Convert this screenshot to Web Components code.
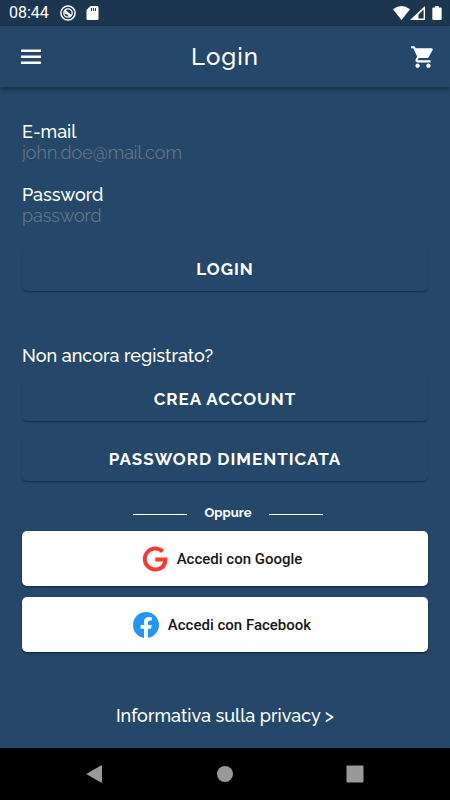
<!DOCTYPE html>
<html lang="it">
<head>
<meta charset="utf-8">
<meta name="viewport" content="width=device-width, initial-scale=1">
<title>Login</title>
<style>
html,body{margin:0;min-height:100%}
body{background:#254769;color:#fff;font-family:Raleway,Lato,"Open Sans",sans-serif;font-size:18px;font-weight:500;line-height:21px}
</style>
</head>
<body>
<login-screen></login-screen>
<script>
function define(name, markup) {
  const template = document.createElement('template');
  template.innerHTML = markup;
  customElements.define(name, class extends HTMLElement {
    constructor() {
      super();
      this.attachShadow({ mode: 'open' }).append(template.content.cloneNode(true));
    }
    connectedCallback() {
      const input = this.shadowRoot.querySelector('input');
      if (input) {
        input.type = this.getAttribute('type');
        input.placeholder = this.getAttribute('placeholder');
      }
    }
  });
}

define('status-bar', `
<style>
:host{display:flex;align-items:center;height:26px;padding:0 8px 0 9px;background:#1d364f;font:16px/26px Roboto,sans-serif}
svg{display:block;fill:currentColor}
.clock{margin-right:11px}
.disc{margin-right:10px}
.signals{display:flex;align-items:center;margin-left:auto}
.battery{margin-left:7px}
</style>
<span class="clock">08:44</span>
<svg class="disc" width="16" height="16" viewBox="0 0 16 16"><circle cx="8" cy="8" r="7.100" fill="none" stroke="currentColor" stroke-width="1.500"/><circle cx="8" cy="8" r="4.200" fill="none" stroke="currentColor" stroke-width="1.300"/><path d="M5 4.600 11.500 10l-2 2-2.300-2.600-2.700-.9z"/></svg>
<svg width="13" height="14" viewBox="0 0 13 14"><path fill-rule="evenodd" d="M4.5 0h6.8Q12.5 0 12.5 1.2v11.6q0 1.2-1.2 1.2H1.7Q.5 14 .5 12.8V4zM5 2v3h1V2zm2 0v3h1V2zm2 0v3h1V2z"/></svg>
<span class="signals">
<svg width="17" height="14" viewBox="0 0 17 14"><path d="M0 3.200Q8.500-3.200 17 3.200L8.500 14z"/></svg>
<svg width="15" height="14" viewBox="0 0 15 14"><path fill-rule="evenodd" d="M15 0v14H0zM13.600 3.500 8.500 8.600v4h5.100z"/></svg>
<svg class="battery" width="10" height="14" viewBox="0 0 10 15"><path d="M3 0h4v1.500h1.800Q10 1.500 10 2.700v11q0 1.300-1.200 1.300H1.200Q0 15 0 13.700v-11q0-1.200 1.200-1.200H3z"/></svg>
</span>`);

define('app-bar', `
<style>
:host{display:grid;grid-template-columns:1fr auto 1fr;align-items:center;height:61px;padding:0 14px;background:#254769;box-shadow:0 2px 5px #0006;box-sizing:border-box}
button{display:grid;padding:0 0 0 4px;border:0;background:none;color:inherit}
button:last-child{justify-self:end}
h1{margin:0;font:500 24px/30px Raleway,Lato,sans-serif;letter-spacing:1px}
svg{fill:currentColor}
</style>
<button aria-label="Menu"><svg width="26" height="26" viewBox="0 0 26 26"><path d="M3 5.500h20v2.500H3zM3 11.500h20v2.500H3zM3 17.500h20V20H3z"/></svg></button>
<h1><slot></slot></h1>
<button aria-label="Carrello"><svg width="26" height="26" viewBox="0 0 24 24"><path d="M7 18c-1.100 0-1.990.9-1.990 2S5.900 22 7 22s2-.9 2-2-.9-2-2-2zM1 2v2h2l3.600 7.590-1.350 2.450c-.16.280-.25.610-.25.960 0 1.100.9 2 2 2h12v-2H7.420c-.14 0-.25-.11-.25-.25l.03-.12.900-1.630h7.450c.75 0 1.410-.41 1.750-1.030l3.580-6.490A1 1 0 0 0 20 4H5.210l-.94-2H1zm16 16c-1.100 0-1.990.9-1.990 2s.89 2 1.990 2 2-.9 2-2-.9-2-2-2z"/></svg></button>`);

define('text-field', `
<style>
:host{display:block}
label{display:block}
input{display:block;width:100%;height:21px;padding:0;border:0;outline:0;background:none;color:inherit;font:inherit}
input::placeholder{color:#71818f;opacity:1;font-weight:300}
</style>
<label><slot></slot><input></label>`);

define('raised-button', `
<style>
:host{display:block}
button{display:block;width:100%;height:44px;padding:0;border:0;border-radius:5px;background:#254769;color:inherit;font:inherit;font-size:17px;font-weight:700;letter-spacing:1px;box-shadow:0 2px 2px -1px #0005,0 1px 2px #0001}
</style>
<button type="button"><slot></slot></button>`);

define('social-button', `
<style>
:host{display:block}
button{display:flex;align-items:center;justify-content:center;gap:9px;width:100%;height:55px;padding:0 6px 0 0;border:0;border-radius:5px;background:#fff;color:#161616;font:500 15px/20px Roboto,sans-serif;box-shadow:0 1px 2px #0008}
</style>
<button type="button"><slot name="icon"></slot><span><slot></slot></span></button>`);

define('or-divider', `
<style>
:host{display:flex;align-items:center;justify-content:center;gap:17px;padding-left:6px;font:700 13px/16px Raleway,Lato,sans-serif}
i{width:54px;height:1px;margin-top:3px;background:#fff}
</style>
<i></i><slot></slot><i></i>`);

define('nav-bar', `
<style>
:host{display:flex;align-items:center;justify-content:center;gap:112px;height:52px;background:#000}
button{display:grid;padding:0;border:0;background:none;color:#999}
svg{fill:currentColor}
</style>
<button aria-label="Indietro"><svg width="18" height="18" viewBox="0 0 18 18"><path d="M16 1v16q0 1-1 .5L1 9.500q-1-.5 0-1L15 .5q1-.5 1 .5z"/></svg></button>
<button aria-label="Home"><svg width="18" height="18" viewBox="0 0 18 18"><circle cx="9" cy="9" r="8"/></svg></button>
<button aria-label="Recenti"><svg width="18" height="18" viewBox="0 0 18 18"><rect x=".5" y=".5" width="17" height="17" rx="1"/></svg></button>`);

define('login-screen', `
<style>
:host{display:flex;flex-direction:column;min-height:100vh}
main{flex:1;display:flex;flex-direction:column;padding:34px 22px 22px}
form,section{display:flex;flex-direction:column}
form{gap:21px;margin-bottom:54px}
p{margin:0 0 11px}
section{gap:16px}
or-divider{margin:24px 0 10px}
.social{gap:11px}
a{color:inherit;text-decoration:none;align-self:center;margin-top:auto}
</style>
<status-bar></status-bar>
<app-bar>Login</app-bar>
<main>
<form>
<text-field type="email" placeholder="john.doe@mail.com">E-mail</text-field>
<text-field type="password" placeholder="password">Password</text-field>
<raised-button>LOGIN</raised-button>
</form>
<p>Non ancora registrato?</p>
<section>
<raised-button>CREA ACCOUNT</raised-button>
<raised-button>PASSWORD DIMENTICATA</raised-button>
</section>
<or-divider>Oppure</or-divider>
<section class="social">
<social-button><svg slot="icon" width="26" height="26" viewBox="0 0 26 26"><path fill="#f83b30" d="M22.200 4.100 19.300 6.900A8.600 8.600 0 0 0 13.300 4.500C8.600 4.500 4.800 8.300 4.800 13s3.800 8.500 8.500 8.500c4.200 0 7-2.400 7.700-6h-7.700v-4h12.100c.1.700.1 1.300.1 2C25.500 20.600 20.600 25.500 13.300 25.500A12.500 12.500 0 1 1 13.300.5c3.400 0 6.500 1.300 8.900 3.600z"/></svg>Accedi con Google</social-button>
<social-button><svg slot="icon" width="26" height="26" viewBox="0 0 24 24"><path fill="#2196f3" d="M24 12.070C24 5.400 18.630 0 12 0S0 5.400 0 12.070C0 18.100 4.390 23.090 10.130 24v-8.440H7.080v-3.490h3.050V9.410c0-3.020 1.790-4.690 4.530-4.690 1.310 0 2.680.24 2.680.24v2.970h-1.510c-1.490 0-1.960.93-1.960 1.890v2.250h3.330l-.53 3.490h-2.800V24C19.610 23.090 24 18.100 24 12.070z"/></svg>Accedi con Facebook</social-button>
</section>
<a href="#privacy">Informativa sulla privacy &gt;</a>
</main>
<nav-bar></nav-bar>`);
</script>
</body>
</html>
